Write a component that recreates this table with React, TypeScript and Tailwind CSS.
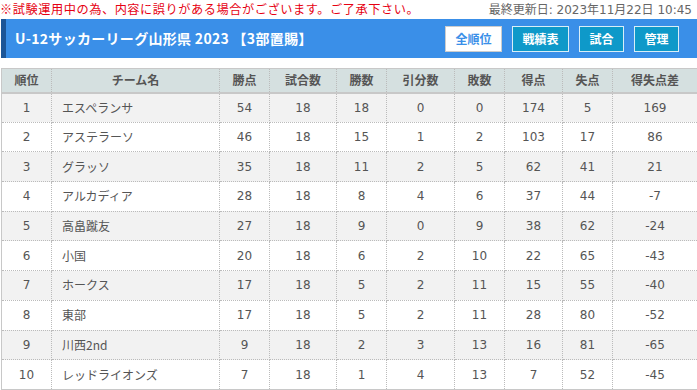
import React from 'react';

const rows: [number, string, number, number, number, number, number, number, number, number][] = [
  [1, 'エスペランサ', 54, 18, 18, 0, 0, 174, 5, 169],
  [2, 'アステラーソ', 46, 18, 15, 1, 2, 103, 17, 86],
  [3, 'グラッソ', 35, 18, 11, 2, 5, 62, 41, 21],
  [4, 'アルカディア', 28, 18, 8, 4, 6, 37, 44, -7],
  [5, '高畠蹴友', 27, 18, 9, 0, 9, 38, 62, -24],
  [6, '小国', 20, 18, 6, 2, 10, 22, 65, -43],
  [7, 'ホークス', 17, 18, 5, 2, 11, 15, 55, -40],
  [8, '東部', 17, 18, 5, 2, 11, 28, 80, -52],
  [9, '川西2nd', 9, 18, 2, 3, 13, 16, 81, -65],
  [10, 'レッドライオンズ', 7, 18, 1, 4, 13, 7, 52, -45],
];

const headers = ['順位', 'チーム名', '勝点', '試合数', '勝数', '引分数', '敗数', '得点', '失点', '得失点差'];
const widths = [50, 168, 50, 67, 50, 68, 50, 58, 50, 85];

export default function App() {
  return (
    <div
      className="w-[697px] h-[390px] overflow-hidden bg-white text-[12px]"
      style={{ fontFamily: '"DejaVu Sans", "Noto Sans CJK JP", sans-serif' }}
    >
      {/* Notice line */}
      <div className="flex justify-between items-center h-[19px] pr-[5px]">
        <span className="text-[#e60012] text-[12.2px] tracking-[0.55px]" style={{ fontFamily: '"Noto Sans CJK JP", sans-serif' }}>
          ※試験運用中の為、内容に誤りがある場合がございます。ご了承下さい。
        </span>
        <span className="text-[#666]">最終更新日: 2023年11月22日 10:45</span>
      </div>

      {/* Title bar */}
      <div className="flex items-center h-[39px] bg-[#3a8fe8] border-l-[5px] border-[#1c5597] ml-[1px]">
        <h1
          className="flex-1 pl-[9px] text-white font-bold text-[14px] tracking-[0.3px]"
          style={{ fontFamily: '"Noto Sans CJK JP", sans-serif' }}
        >
          U-12サッカーリーグ山形県 2023 【3部置賜】
        </h1>
        <div className="flex gap-[10px] pr-[18px]" style={{ fontFamily: '"Noto Sans CJK JP", sans-serif' }}>
          <button className="w-[57px] h-[26px] bg-white border border-[#ccc] text-[#3a8fe8] font-bold text-[12px]">全順位</button>
          <button className="w-[57px] h-[26px] bg-[#0e99c9] border border-[#d9eef7] text-white font-bold text-[12px]">戦績表</button>
          <button className="w-[45px] h-[26px] bg-[#0e99c9] border border-[#d9eef7] text-white font-bold text-[12px]">試合</button>
          <button className="w-[45px] h-[26px] bg-[#0e99c9] border border-[#d9eef7] text-white font-bold text-[12px]">管理</button>
        </div>
      </div>

      {/* Standings */}
      <table className="mt-[10px] ml-[1px] w-[695px] table-fixed border-collapse border border-[#c8c8c8] text-[#555]">
        <colgroup>
          {widths.map((w, i) => (
            <col key={i} style={{ width: w }} />
          ))}
        </colgroup>
        <thead>
          <tr className="h-[24px] bg-[#d5e0e0]">
            {headers.map((h) => (
              <th
                key={h}
                className="font-bold text-center border-x border-dotted border-[#bbb]"
                style={{ fontFamily: '"Noto Sans CJK JP", sans-serif', borderBottom: '2px solid #c8c8c8' }}
              >
                {h}
              </th>
            ))}
          </tr>
        </thead>
        <tbody>
          {rows.map((r) => (
            <tr key={r[0]} className={`h-[29.7px] ${r[0] % 2 === 1 ? 'bg-[#f2f2f2]' : 'bg-white'}`}>
              {r.map((v, i) => (
                <td
                  key={i}
                  className={`border border-dotted border-[#bbb] ${i === 1 ? 'text-left pl-[10px]' : 'text-center'}`}
                  style={i === 1 ? { fontFamily: '"Noto Sans CJK JP", sans-serif' } : undefined}
                >
                  {v}
                </td>
              ))}
            </tr>
          ))}
        </tbody>
      </table>
    </div>
  );
}
